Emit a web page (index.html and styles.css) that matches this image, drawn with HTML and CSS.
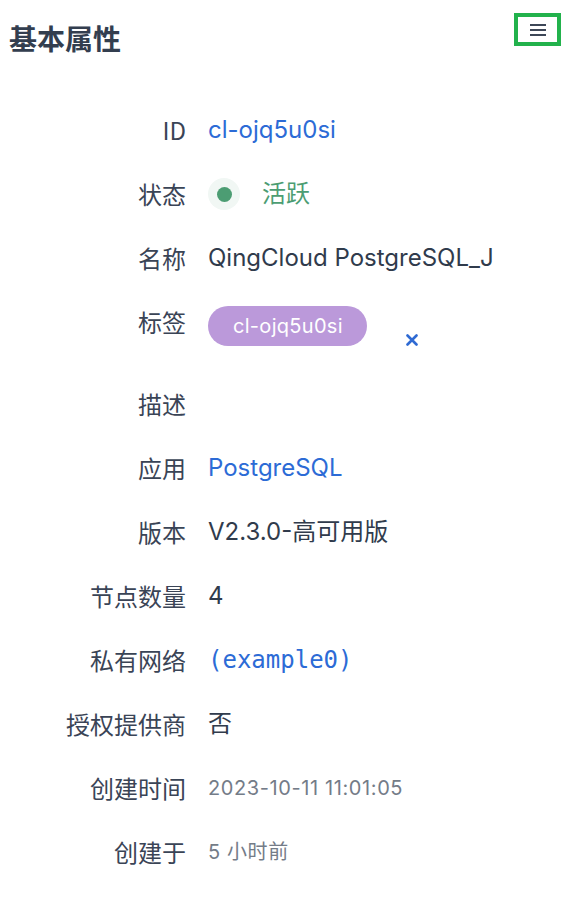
FILE: index.html
```html
<!DOCTYPE html>
<html lang="zh">
<head>
<meta charset="utf-8">
<link rel="stylesheet" href="styles.css">
</head>
<body>
<div class="panel">
  <header class="head">
    <h1 class="title">基本属性</h1>
    <button class="menu" aria-label="menu">
      <svg width="16" height="12" viewBox="0 0 16 12"><path d="M0 1H16M0 6H16M0 11H16" stroke="#3d4757" stroke-width="2"/></svg>
    </button>
  </header>
  <dl class="props">
    <dt>ID</dt><dd><a class="link">cl-ojq5u0si</a></dd>
    <dt>状态</dt><dd class="status"><span class="dot"></span><span class="ok">活跃</span></dd>
    <dt>名称</dt><dd>QingCloud PostgreSQL_J</dd>
    <dt class="tall">标签</dt>
    <dd class="tags"><span class="tag">cl-ojq5u0si</span><svg class="x" width="12" height="12" viewBox="0 0 12 12"><path d="M1.5 1.5L10.5 10.5M10.5 1.5L1.5 10.5" stroke="#2f6ad3" stroke-width="2.6" stroke-linecap="round"/></svg></dd>
    <dt>描述</dt><dd></dd>
    <dt>应用</dt><dd><a class="link">PostgreSQL</a></dd>
    <dt>版本</dt><dd>V2.3.0-高可用版</dd>
    <dt>节点数量</dt><dd>4</dd>
    <dt>私有网络</dt><dd><a class="link mono">(example0)</a></dd>
    <dt>授权提供商</dt><dd>否</dd>
    <dt>创建时间</dt><dd class="muted">2023-10-11 11:01:05</dd>
    <dt>创建于</dt><dd class="muted">5 小时前</dd>
  </dl>
</div>
</body>
</html>
```
FILE: styles.css
```css
* { box-sizing: border-box; }
html, body { margin: 0; padding: 0; background: #fff; }
body {
  font-family: Inter, "Noto Sans CJK SC", sans-serif;
  color: #344054;
  width: 568px;
}
.head {
  display: flex;
  justify-content: space-between;
  align-items: flex-start;
  padding: 0 7px 0 9px;
  height: 98px;
}
.title {
  margin: 0;
  font-size: 28px;
  line-height: 76px;
  font-weight: 700;
  color: #333e4f;
  font-family: "Noto Sans CJK SC", sans-serif;
}
.menu {
  margin-top: 13px;
  width: 47px;
  height: 33px;
  border: 4px solid #22b24c;
  background: #fff;
  padding: 0;
  display: flex;
  align-items: center;
  justify-content: center;
}
.menu svg { display: block; }
.props {
  margin: 0;
  display: grid;
  grid-template-columns: 186px 1fr;
  column-gap: 22px;
  font-size: 24px;
}
.props dt {
  text-align: right;
  line-height: 64px;
  height: 64px;
  color: #3a4456;
  font-family: "Noto Sans CJK SC", sans-serif;
}
.props dt.tall { height: 82px; }
.props dd {
  margin: 0;
  line-height: 64px;
  height: 64px;
  color: #303b4c;
  display: flex;
  align-items: center;
  white-space: nowrap;
}
.link { color: #2c6bd6; }
.mono { font-family: "DejaVu Sans Mono", monospace; font-size: 24px; }
.props dd.status { gap: 22px; }
.dot {
  width: 32px;
  height: 32px;
  border-radius: 50%;
  background: #f1f7f4;
  display: flex;
  align-items: center;
  justify-content: center;
}
.dot::after {
  content: "";
  width: 15px;
  height: 15px;
  border-radius: 50%;
  background: #4c9d73;
}
.ok { color: #4c9d73; }
.props dd.tags {
  height: 82px;
  align-items: flex-end;
  padding: 16px 0 26px;
  gap: 39px;
}
.tag {
  height: 40px;
  line-height: 40px;
  padding: 0 24px 0 25px;
  border-radius: 20px;
  background: #bb99da;
  color: #fff;
  font-size: 20px;
  letter-spacing: 0.3px;
}
.x { display: block; }
.props dd.muted { color: #747c88; font-size: 20px; letter-spacing: 0.6px; }
```
